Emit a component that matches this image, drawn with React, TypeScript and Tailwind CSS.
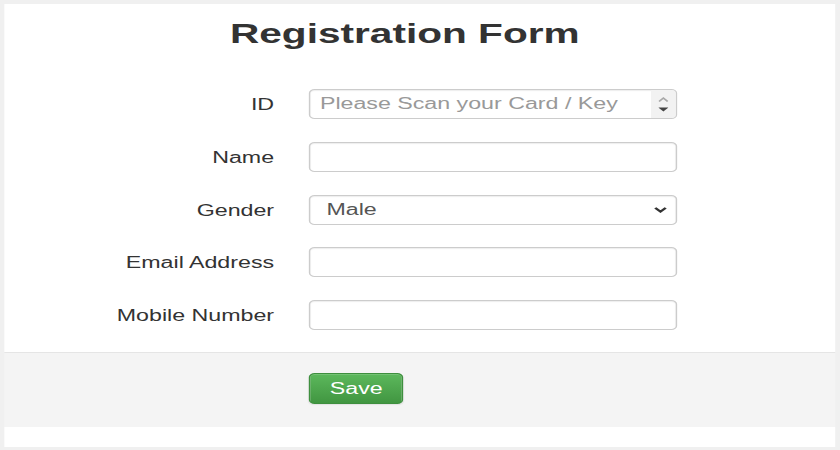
import React, { useState } from "react";

// whole sheet is drawn narrow and stretched sideways, like the source capture
function App() {
  const [gender, setGender] = useState("Male");

  const fields = [
    { label: "Name", type: "text" },
    { label: "Gender", type: "select" },
    { label: "Email Address", type: "email" },
    { label: "Mobile Number", type: "tel" },
  ];

  const inputCls =
    "h-[30px] w-[253.8px] rounded-[4px] border border-[#ccc] bg-white px-[6.5px] text-[16px] text-[#555] shadow-[inset_0_1px_1px_rgba(0,0,0,0.075)] outline-none placeholder:text-[#999]";

  return (
    <div className="h-[450px] w-[840px] overflow-hidden bg-[#f0f0f0]">
      <div className="w-[579.31px] origin-top-left scale-x-[1.45] px-[3.45px] pt-[4px] font-['Liberation_Sans',Arial,sans-serif] text-[#333]">
        <div className="bg-white pt-[16px] pb-[22px]">
          <h2 className="pr-[21px] text-center text-[28px] leading-[28px] font-bold">
            Registration Form
          </h2>

          <form className="mt-[41px] flex flex-col gap-[22.75px]">
            <div className="flex items-center">
              <label className="w-[185.6px] pt-[2px] text-right text-[16px] leading-none">ID</label>
              <div className="relative ml-[24.1px]">
                <input
                  type="number"
                  placeholder="Please Scan your Card / Key"
                  className={`${inputCls} [appearance:textfield] [&::-webkit-inner-spin-button]:appearance-none`}
                />
                <div className="absolute top-[1px] right-[1px] bottom-[1px] flex w-[17px] flex-col items-center justify-center gap-[5px] rounded-r-[3px] bg-[#f2f2f2]">
                  <svg width="7" height="5" viewBox="0 0 7 5">
                    <path d="M0.5 4.5 L3.5 1 L6.5 4.5" fill="none" stroke="#a8a8a8" strokeWidth="1.3" />
                  </svg>
                  <svg width="7" height="5" viewBox="0 0 7 5">
                    <path d="M0 0.5 L7 0.5 L3.5 4.5 Z" fill="#444" />
                  </svg>
                </div>
              </div>
            </div>

            {fields.map((f) => (
              <div key={f.label} className="flex items-center">
                <label className="w-[185.6px] pt-[2px] text-right text-[16px] leading-none">{f.label}</label>
                <div className="relative ml-[24.1px]">
                  {f.type === "select" ? (
                    <>
                      <select
                        value={gender}
                        onChange={(e) => setGender(e.target.value)}
                        className={`${inputCls} appearance-none pl-[11px]`}
                      >
                        <option>Male</option>
                        <option>Female</option>
                      </select>
                      <svg
                        className="pointer-events-none absolute top-[12px] right-[6.5px]"
                        width="9"
                        height="6"
                        viewBox="0 0 9 6"
                      >
                        <path d="M0.9 0.9 L4.5 4.6 L8.1 0.9" fill="none" stroke="#333" strokeWidth="2" />
                      </svg>
                    </>
                  ) : (
                    <input type={f.type} className={inputCls} />
                  )}
                </div>
              </div>
            ))}
          </form>
        </div>

        <div className="h-[75px] border-t border-[#e5e5e5] bg-[#f4f4f4] pt-[20px] pl-[209.5px]">
          <button
            type="button"
            className="h-[31px] w-[65.5px] rounded-[4px] border border-[#3e8f3e] bg-gradient-to-b from-[#5cb85c] to-[#419641] text-[16px] text-white shadow-[inset_0_1px_0_rgba(255,255,255,0.15),0_1px_1px_rgba(0,0,0,0.075)]"
          >
            Save
          </button>
        </div>

        <div className="h-[20px] bg-white" />
      </div>
    </div>
  );
}

export default App;
